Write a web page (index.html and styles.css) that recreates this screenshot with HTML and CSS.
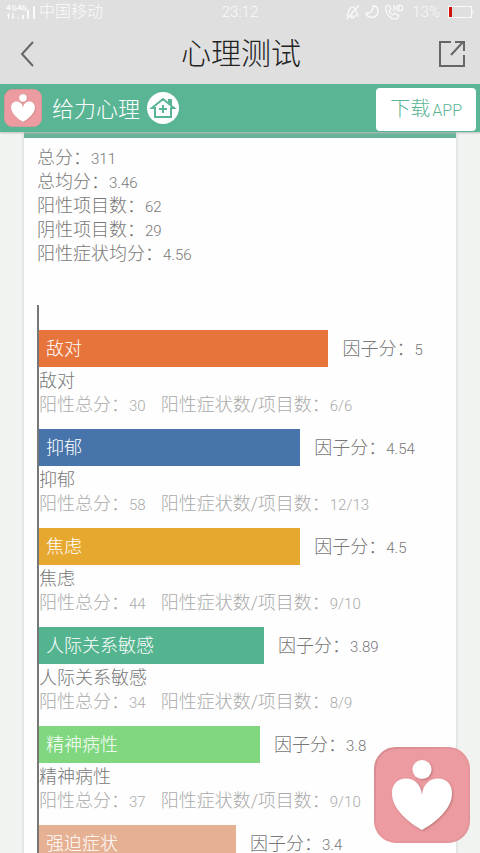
FILE: index.html
```html
<!DOCTYPE html>
<html lang="zh-CN">
<head>
<meta charset="utf-8">
<meta name="viewport" content="width=device-width, initial-scale=1">
<title>心理测试</title>
<link rel="stylesheet" href="styles.css">
</head>
<body>
<div class="app">
  <div class="status">
    <svg class="signal" width="30" height="16" viewBox="0 0 30 16" fill="none" stroke="currentColor" stroke-width="1.2" aria-hidden="true">
      <path d="M3.500 1L1 4.500h4M3.500 1v5M9.500 2H7v4h3V4H8.500M14.500 1L12 4.500h4M14.500 1v5M19.500 2H17v4h3V4h-1.500M2.500 9v6M1 11h3M7 9v6M5 13h4M12 13v2"/>
      <path stroke-width="2" d="M17 11v4M22 6v9M28 2v13"/>
    </svg>
    <span class="carrier">中国移动</span>
    <span class="clock">23:12</span>
    <div class="status-end">
      <svg width="14" height="16" viewBox="0 0 14 16" fill="none" stroke="currentColor" stroke-width="1.2" aria-hidden="true"><path d="M1 12c2-2 1-8 5-9 5 0 4 7 6 9zM5 12c0 3 3 3 3 0M13 1L1 15"/></svg>
      <svg width="14" height="16" viewBox="0 0 14 16" fill="none" stroke="currentColor" stroke-width="1.4" aria-hidden="true"><path d="M8 2c0 5-3 8-7 7 2 7 12 5 12-2 0-3-2-5-5-5z"/></svg>
      <svg class="call" width="20" height="16" viewBox="0 0 20 16" fill="none" stroke="currentColor" stroke-width="1.200" aria-hidden="true"><path d="M2 2l3-1 2 4-2 2c1 2 2 3 4 4l2-2 4 3-2 3C7 16 0 9 2 2zM10 1v6M10 4h3M13 1v6M15 1v6c5 0 5-6 0-6"/></svg>
      <span class="percent">13%</span>
      <svg width="26" height="12" viewBox="0 0 26 12" aria-hidden="true"><path fill="none" stroke="currentColor" d="M.5 .5h23v11H.5zM25 4v4"/><path fill="#d3120e" d="M1 1h3v10H1z"/></svg>
    </div>
  </div>
  <header class="titlebar">
    <button class="icon-button" aria-label="返回">
      <svg width="14" height="28" viewBox="0 0 14 28" fill="none" stroke="currentColor" stroke-width="2"><path d="M13 2L2 14l11 12"/></svg>
    </button>
    <h1 class="title">心理测试</h1>
    <button class="icon-button" aria-label="分享">
      <svg width="28" height="28" viewBox="0 0 28 28" fill="none" stroke="currentColor" stroke-width="2"><path d="M13 2H2v24h24V15M13 15L25 2M17 2h9v9"/></svg>
    </button>
  </header>
  <div class="brandbar">
    <svg class="brand-logo" viewBox="0 0 96 96" aria-hidden="true"><use href="#logo"/></svg>
    <span class="brand-name">给力心理</span>
    <svg class="home" width="32" height="32" viewBox="0 0 32 32" aria-hidden="true">
      <circle cx="16" cy="16" r="16" fill="#fff"/>
      <path fill="none" stroke="#5ab595" stroke-width="2" d="M5 16L16 7l11 9h-3v9H8v-9zM22 11V8h2v5M16 13v8M12 17h8"/>
    </svg>
    <a class="download" href="#app">下载<span class="app-word">APP</span></a>
  </div>
  <main class="content">
    <section class="card">
      <div class="summary">
        <p class="line">总分：<span class="num">311</span></p>
        <p class="line">总均分：<span class="num">3.46</span></p>
        <p class="line">阳性项目数：<span class="num">62</span></p>
        <p class="line">阴性项目数：<span class="num">29</span></p>
        <p class="line">阳性症状均分：<span class="num">4.56</span></p>
      </div>
      <div class="chart">
        <article class="factor">
          <div class="row"><div class="bar orange" style="width:72%">敌对</div><p class="score">因子分：<span class="num">5</span></p></div>
          <h2 class="name">敌对</h2>
          <p class="detail"><span>阳性总分：<span class="num">30</span></span><span>阳性症状数/项目数：<span class="num">6/6</span></span></p>
        </article>
        <article class="factor">
          <div class="row"><div class="bar blue" style="width:65%">抑郁</div><p class="score">因子分：<span class="num">4.54</span></p></div>
          <h2 class="name">抑郁</h2>
          <p class="detail"><span>阳性总分：<span class="num">58</span></span><span>阳性症状数/项目数：<span class="num">12/13</span></span></p>
        </article>
        <article class="factor">
          <div class="row"><div class="bar yellow" style="width:65%">焦虑</div><p class="score">因子分：<span class="num">4.5</span></p></div>
          <h2 class="name">焦虑</h2>
          <p class="detail"><span>阳性总分：<span class="num">44</span></span><span>阳性症状数/项目数：<span class="num">9/10</span></span></p>
        </article>
        <article class="factor">
          <div class="row"><div class="bar teal" style="width:56%">人际关系敏感</div><p class="score">因子分：<span class="num">3.89</span></p></div>
          <h2 class="name">人际关系敏感</h2>
          <p class="detail"><span>阳性总分：<span class="num">34</span></span><span>阳性症状数/项目数：<span class="num">8/9</span></span></p>
        </article>
        <article class="factor">
          <div class="row"><div class="bar green" style="width:55%">精神病性</div><p class="score">因子分：<span class="num">3.8</span></p></div>
          <h2 class="name">精神病性</h2>
          <p class="detail"><span>阳性总分：<span class="num">37</span></span><span>阳性症状数/项目数：<span class="num">9/10</span></span></p>
        </article>
        <article class="factor">
          <div class="row"><div class="bar peach" style="width:49%">强迫症状</div><p class="score">因子分：<span class="num">3.4</span></p></div>
        </article>
      </div>
    </section>
  </main>
</div>
<button class="floating" aria-label="给力心理">
  <svg class="floating-logo" viewBox="0 0 96 96">
    <defs>
      <linearGradient id="edge" x1="0" y1="0" x2="1" y2="1"><stop offset="0" stop-color="#d48a8f"/><stop offset=".5" stop-color="#e7959b"/><stop offset="1" stop-color="#e2959a"/></linearGradient>
      <filter id="soft" x="-20%" y="-20%" width="140%" height="140%"><feDropShadow dx="1" dy="1" stdDeviation="1" flood-color="#9c5459" flood-opacity=".6"/></filter>
      <g id="logo">
        <rect x="1" y="1" width="94" height="94" rx="21" fill="#ec9ba0" stroke="url(#edge)" stroke-width="2"/>
        <g fill="#fff" filter="url(#soft)">
          <circle cx="48" cy="22.500" r="9.500"/>
          <path d="M48 48C47 37 40 31.500 32 31.500 23 31.500 18 38 18 46c0 17 18 30 30 37 12-7 30-20 30-37 0-8-5-14.500-14-14.500C56 31.500 49 37 48 48z"/>
        </g>
      </g>
    </defs>
    <use href="#logo"/>
  </svg>
</button>
</body>
</html>
```
FILE: styles.css
```css
* { box-sizing: border-box; }

body {
  margin: 0;
  background: #f0f3f0;
  color: #777;
  font-family: Roboto, "Noto Sans CJK SC", sans-serif;
  font-size: 18px;
  font-weight: 300;
  line-height: 24px;
}

h1, h2, p { margin: 0; font-weight: 300; }

button {
  padding: 0;
  border: 0;
  background: none;
  color: inherit;
  font: inherit;
}

svg { display: block; flex: none; }

.app {
  display: flex;
  flex-direction: column;
  height: 100vh;
}

.status {
  display: grid;
  grid-template-columns: 1fr auto 1fr;
  grid-template-areas: "start clock end";
  align-items: center;
  height: 24px;
  padding: 0 6px;
  background: #dfdfdf;
  color: #fafafa;
  font-size: 16px;
  flex: none;
}

.signal { grid-area: start; }

.carrier { grid-area: start; margin-left: 33px; }

.clock { grid-area: clock; font-size: 15px; }

.status-end {
  grid-area: end;
  display: flex;
  align-items: center;
  justify-content: flex-end;
  gap: 5px;
}

.percent { margin: 0 3px; font-size: 15px; }

.titlebar {
  display: flex;
  align-items: center;
  justify-content: space-between;
  height: 60px;
  padding: 0 14px 0 20px;
  background: #dfdfdf;
  color: #666;
  flex: none;
}

.icon-button {
  display: flex;
  width: 28px;
}

.title {
  margin-right: 4px;
  color: #222;
  font-size: 30px;
  line-height: 36px;
}

.brandbar {
  display: flex;
  align-items: center;
  height: 48px;
  padding: 0 4px;
  background: #5ab595;
  box-shadow: 0 1px 2px #bbb;
  color: #fff;
  flex: none;
  z-index: 1;
}

.brand-logo { width: 38px; height: 38px; }

.brand-name {
  margin: 4px 7px 0 10px;
  font-size: 22px;
}

.download {
  margin: 3px 0 0 auto;
  padding: 10px 14px;
  border-radius: 4px;
  background: #fff;
  color: #5ab595;
  font-size: 20px;
  line-height: 23px;
  text-decoration: none;
}

.app-word { margin-left: 2px; font-size: 16px; line-height: 1; }

.content {
  flex: 1;
  min-height: 0;
  overflow: hidden;
  padding: 0 24px;
}

.card {
  padding: 8px 15px 0 13px;
  border-top: 6px solid #67b499;
  background: #fefefe;
  box-shadow: 0 0 3px #c5cbd0;
}

.num { font-size: 15px; line-height: 1; }

.chart {
  margin-top: 39px;
  padding-top: 25px;
  border-left: 2px solid #777;
}

.factor { margin-bottom: 12px; }

.row {
  display: flex;
  align-items: center;
  gap: 14px;
  margin-bottom: 2px;
}

.bar {
  height: 37px;
  padding: 0 7px;
  color: #fff;
  line-height: 37px;
}

.score { white-space: nowrap; }

.name { font-size: 18px; line-height: 24px; }

.detail {
  display: flex;
  gap: 15px;
  color: #aaa;
  white-space: nowrap;
}

.orange { background: #e7743b; }
.blue { background: #4774aa; }
.yellow { background: #e7a830; }
.teal { background: #54b48f; }
.green { background: #80d77f; }
.peach { background: #e6b193; }

.floating {
  position: fixed;
  right: 10px;
  bottom: 10px;
}

.floating-logo { width: 96px; height: 96px; }
```
